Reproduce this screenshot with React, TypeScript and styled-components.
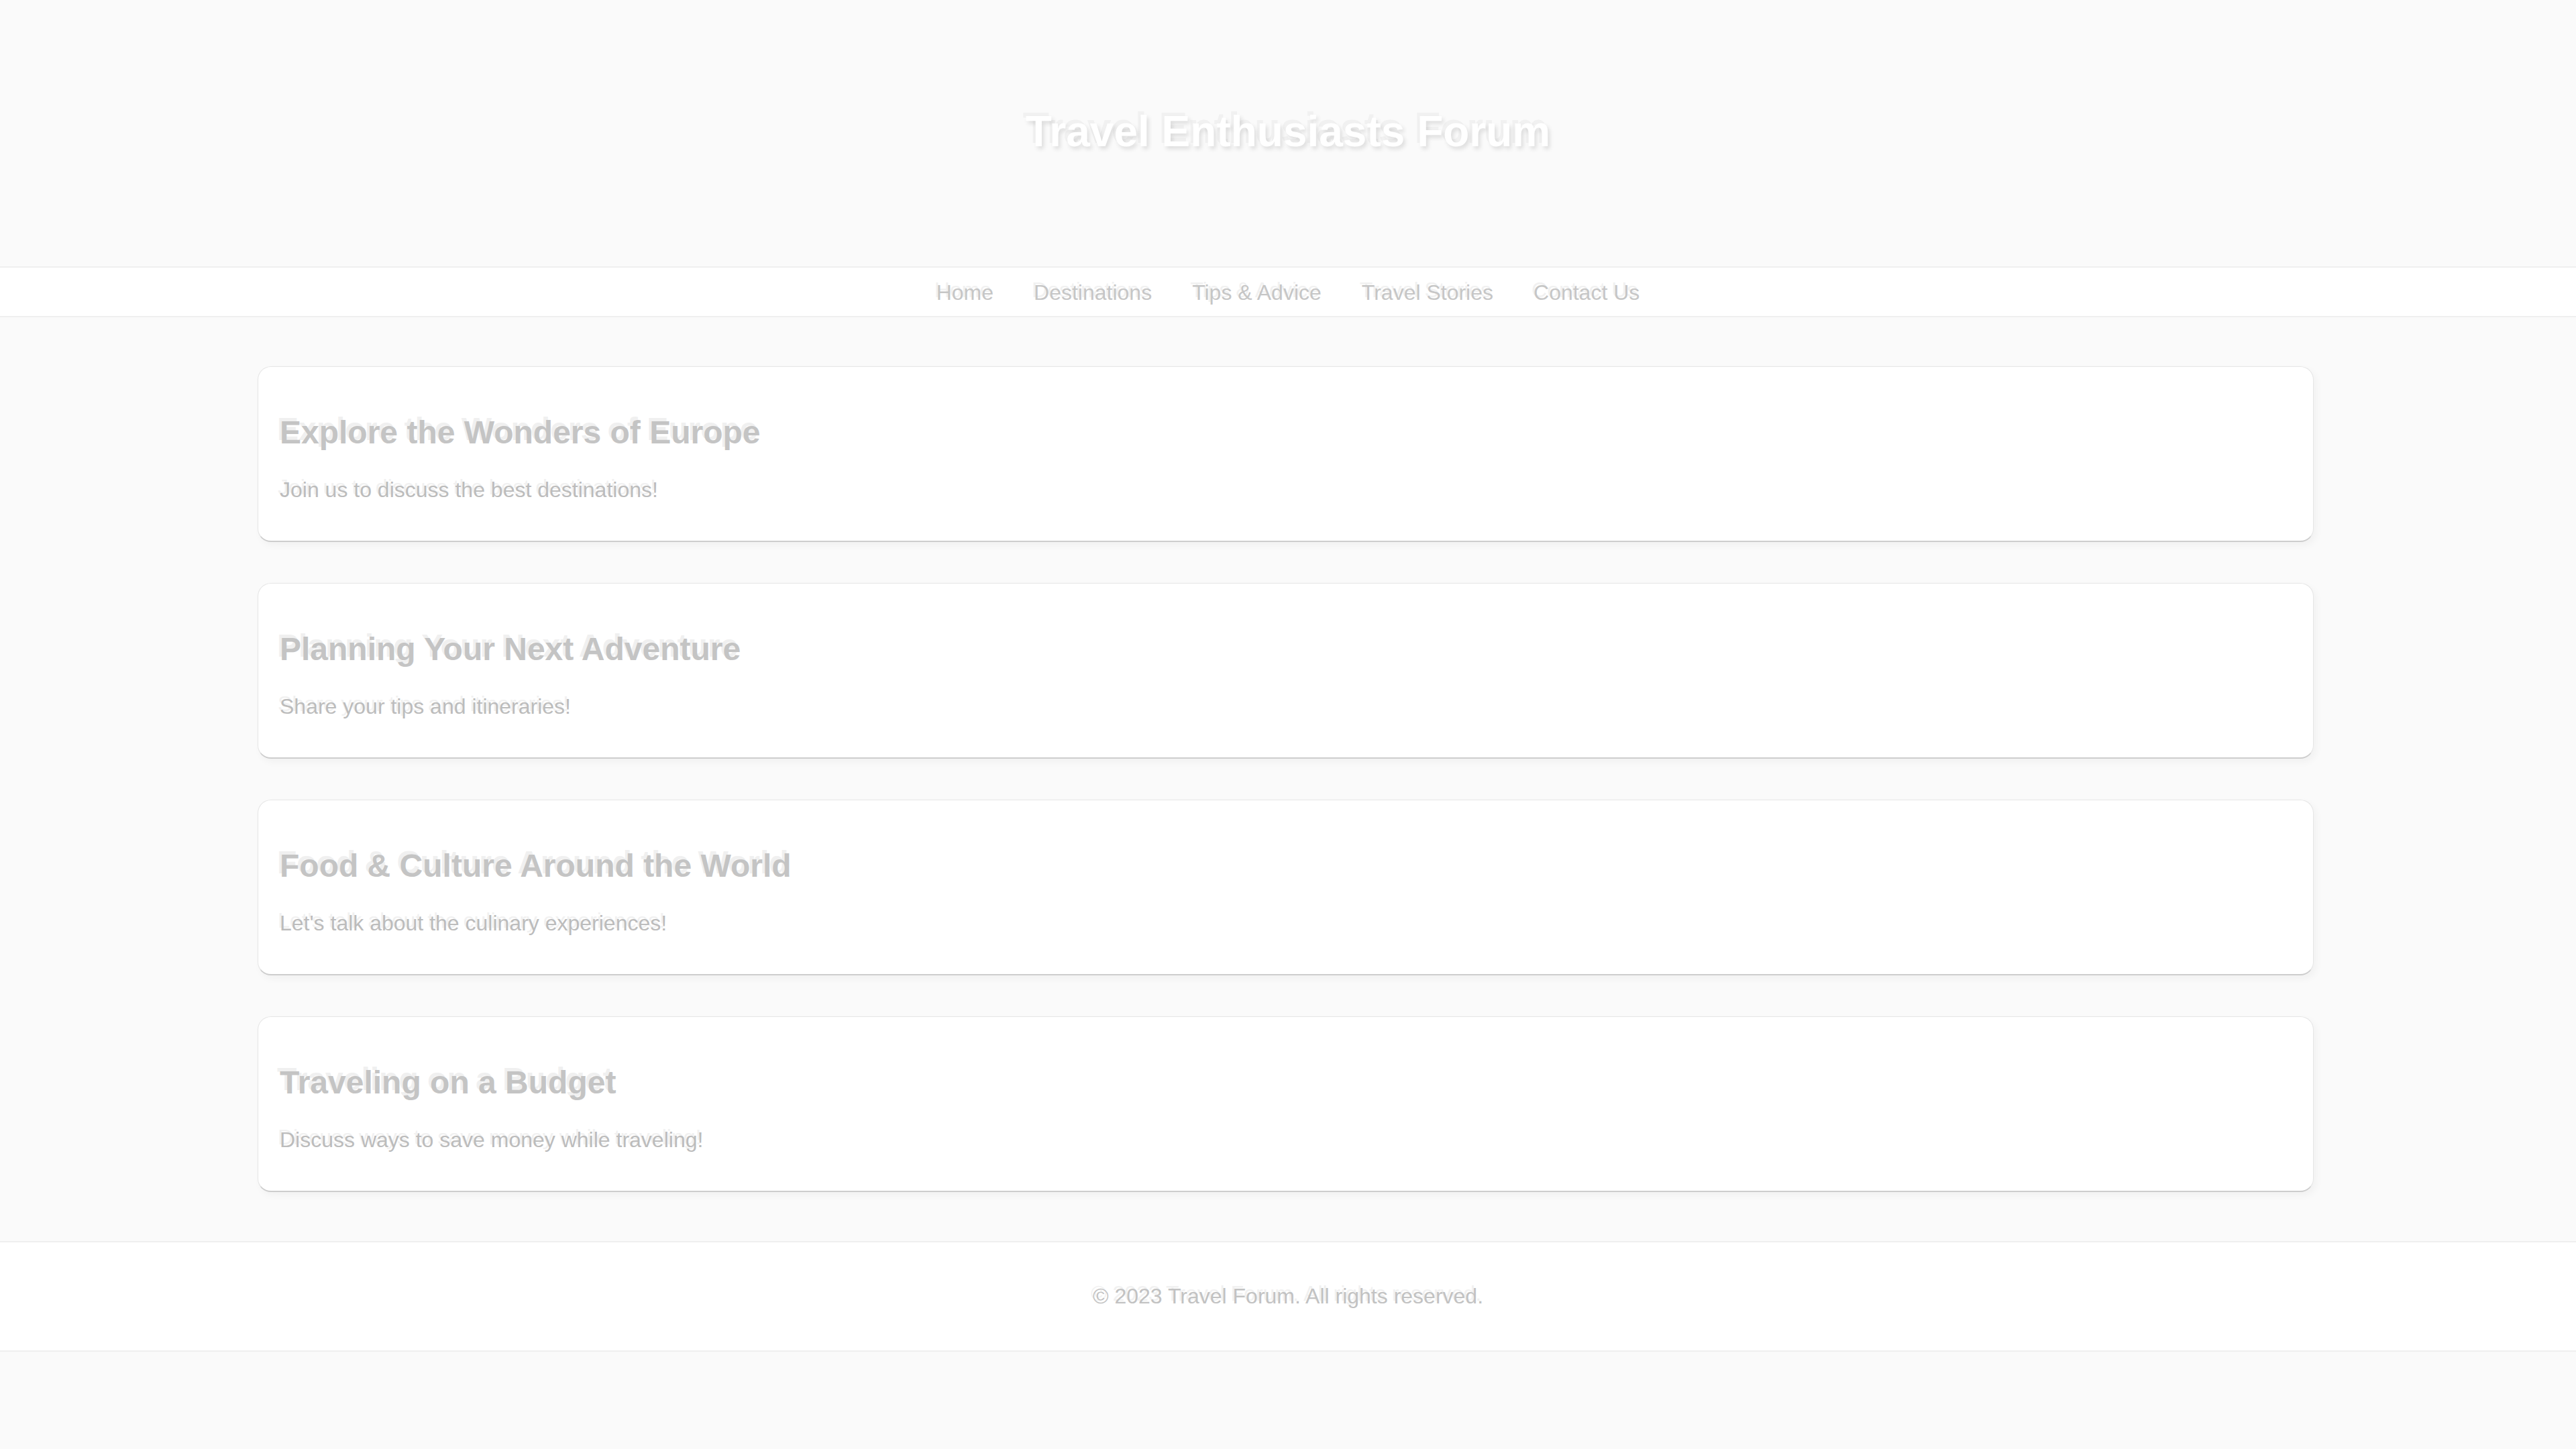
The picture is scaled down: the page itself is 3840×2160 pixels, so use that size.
import React from "react";
import styled, { createGlobalStyle } from "styled-components";

const GlobalStyle = createGlobalStyle`
  html, body {
    margin: 0;
    padding: 0;
    background: #fafafa;
    font-family: "Liberation Sans", Arial, sans-serif;
  }
`;

const topics = [
  {
    title: "Explore the Wonders of Europe",
    text: "Join us to discuss the best destinations!",
  },
  {
    title: "Planning Your Next Adventure",
    text: "Share your tips and itineraries!",
  },
  {
    title: "Food & Culture Around the World",
    text: "Let's talk about the culinary experiences!",
  },
  {
    title: "Traveling on a Budget",
    text: "Discuss ways to save money while traveling!",
  },
];

const links = ["Home", "Destinations", "Tips & Advice", "Travel Stories", "Contact Us"];

export default function App() {
  return (
    <>
      <GlobalStyle />
      <Page>
        <Header>
          <Title>Travel Enthusiasts Forum</Title>
        </Header>
        <Nav>
          {links.map((l) => (
            <NavLink key={l} href="#">
              {l}
            </NavLink>
          ))}
        </Nav>
        <Main>
          {topics.map((t) => (
            <Card key={t.title}>
              <CardTitle>{t.title}</CardTitle>
              <CardText>{t.text}</CardText>
            </Card>
          ))}
        </Main>
        <Footer>
          <FooterText>© 2023 Travel Forum. All rights reserved.</FooterText>
        </Footer>
      </Page>
    </>
  );
}

const Page = styled.div`
  min-height: 2160px;
  background: #fafafa;
`;

const Header = styled.header`
  height: 397px;
  display: flex;
  align-items: center;
  justify-content: center;
  padding-bottom: 6px;
  box-sizing: border-box;
`;

const Title = styled.h1`
  margin: 0;
  font-size: 64px;
  font-weight: 700;
  color: #ffffff;
  text-shadow: 3px 4px 6px rgba(0, 0, 0, 0.12), -4px -5px 0 rgba(232, 232, 232, 0.5);
`;

const Nav = styled.nav`
  display: flex;
  justify-content: center;
  gap: 60px;
  background: #ffffff;
  border-top: 2px solid #efefef;
  border-bottom: 2px solid #efefef;
  padding: 19px 0 16px;
`;

const NavLink = styled.a`
  font-size: 32px;
  line-height: 37px;
  color: #c6c6c6;
  text-decoration: none;
  text-shadow: -3px -4px 0 rgba(235, 235, 235, 0.7);
`;

const Main = styled.main`
  width: calc(80% - 7px);
  margin: 0 0 0 10%;
  padding: 73px 0 73px;
  display: flex;
  flex-direction: column;
  gap: 61px;
`;

const Card = styled.section`
  background: #ffffff;
  border: 1px solid #e6e6e6;
  border-bottom: 2px solid #cdcdcd;
  border-radius: 20px;
  padding: 30px 30px 25px 32px;
  box-shadow: 4px 5px 12px rgba(0, 0, 0, 0.04);
`;

const CardTitle = styled.h2`
  margin: 40px 0;
  font-size: 48px;
  line-height: 55px;
  font-weight: 700;
  color: #c4c4c4;
  text-shadow: -4px -5px 0 rgba(230, 230, 230, 0.6);
`;

const CardText = styled.p`
  margin: 32px 0;
  font-size: 32px;
  line-height: 37px;
  color: #bcbcbc;
  text-shadow: -3px -4px 0 rgba(235, 235, 235, 0.7);
`;

const Footer = styled.footer`
  background: #ffffff;
  border-top: 2px solid #efefef;
  border-bottom: 2px solid #efefef;
  padding: 30px 0;
  text-align: center;
`;

const FooterText = styled.p`
  margin: 32px 0;
  font-size: 32px;
  line-height: 37px;
  color: #c2c2c2;
  text-shadow: -3px -4px 0 rgba(235, 235, 235, 0.7);
`;
